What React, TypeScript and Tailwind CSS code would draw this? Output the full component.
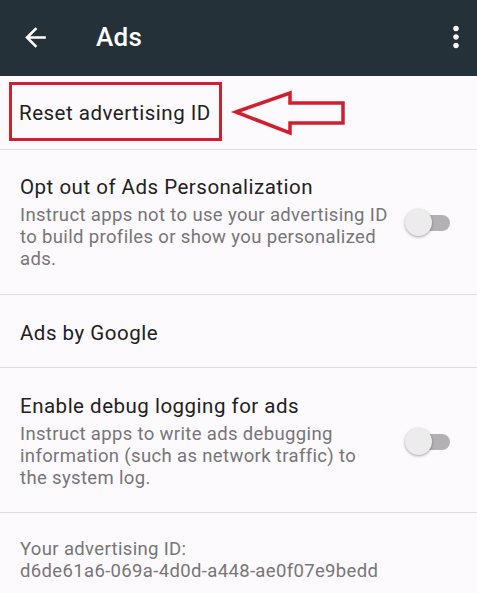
import React from "react";

function Toggle() {
  return (
    <div className="relative w-[45px] h-[28px] flex items-center">
      <div className="absolute left-[6px] right-0 h-[16px] rounded-full bg-[#b3b1b3]" />
      <div className="absolute left-0 w-[27px] h-[27px] rounded-full bg-[#ececec] shadow-[0_1px_3px_rgba(0,0,0,0.35)]" />
    </div>
  );
}

function Divider() {
  return <div className="h-px bg-[#dedbde]" />;
}

const title = "text-[20.5px] leading-[24px] tracking-[0.5px] text-[#212121]";
const summary = "text-[18.5px] leading-[22px] tracking-[0.35px] text-[#777577]";

function Lines({ lines }: { lines: string[] }) {
  return (
    <div className={"mt-[5px] whitespace-nowrap " + summary}>
      {lines.map((l) => (
        <div key={l}>{l}</div>
      ))}
    </div>
  );
}

export default function App() {
  return (
    <div
      className="w-[477px] h-[593px] overflow-hidden bg-[#fcfafc] flex flex-col"
      style={{ fontFamily: "Roboto, 'Noto Sans', sans-serif" }}
    >
      {/* Header */}
      <div className="h-[76px] bg-[#253139] flex items-center relative shrink-0">
        <svg width="31" height="31" viewBox="0 0 24 24" className="ml-[20px] mt-[-2px]" fill="#ffffff">
          <path d="M20 11H7.83l5.59-5.59L12 4l-8 8 8 8 1.41-1.41L7.83 13H20v-2z" />
        </svg>
        <div className="ml-[45px] mt-[-2px] text-white text-[26px] tracking-[0.3px] font-medium leading-none">Ads</div>
        <div className="flex-1" />
        <svg width="34" height="34" viewBox="0 0 24 24" className="mr-[4px] mt-[-2px]" fill="#ffffff">
          <path d="M12 8c1.1 0 2-.9 2-2s-.9-2-2-2-2 .9-2 2 .9 2 2 2zm0 2c-1.1 0-2 .9-2 2s.9 2 2 2 2-.9 2-2-.9-2-2-2zm0 6c-1.1 0-2 .9-2 2s.9 2 2 2 2-.9 2-2-.9-2-2-2z" />
        </svg>
      </div>

      {/* Reset advertising ID */}
      <div className="relative h-[73px] pt-[6px] pl-[9px] shrink-0">
        <div className="w-[213px] h-[59px] border-[3px] border-[#d0202f] pl-[7px] pt-[16px]">
          <div className={title + " whitespace-nowrap"}>Reset advertising ID</div>
        </div>
        <svg
          className="absolute left-0 top-0"
          width="477"
          height="73"
          viewBox="0 0 477 73"
          fill="none"
        >
          <polygon
            points="236,36 290,17 290,27 343,27 343,47 290,47 290,57"
            stroke="#d0202f"
            strokeWidth="3.5"
            strokeLinejoin="miter"
          />
        </svg>
      </div>
      <Divider />

      {/* Opt out */}
      <div className="flex items-center pl-[20px] pt-[25px] pb-[24px] shrink-0">
        <div className="w-[365px]">
          <div className={title}>Opt out of Ads Personalization</div>
          <Lines
            lines={[
              "Instruct apps not to use your advertising ID",
              "to build profiles or show you personalized",
              "ads.",
            ]}
          />
        </div>
        <div className="ml-[20px]">
          <Toggle />
        </div>
      </div>
      <Divider />

      {/* Ads by Google */}
      <div className="pl-[20px] pt-[26px] pb-[22px] shrink-0">
        <div className={title}>Ads by Google</div>
      </div>
      <Divider />

      {/* Debug logging */}
      <div className="flex items-center pl-[20px] pt-[26px] pb-[23px] shrink-0">
        <div className="w-[365px]">
          <div className={title}>Enable debug logging for ads</div>
          <Lines
            lines={[
              "Instruct apps to write ads debugging",
              "information (such as network traffic) to",
              "the system log.",
            ]}
          />
        </div>
        <div className="ml-[20px]">
          <Toggle />
        </div>
      </div>
      <Divider />

      {/* ID */}
      <div className={"pl-[20px] pt-[25px] " + summary}>
        <div>Your advertising ID:</div>
        <div>d6de61a6-069a-4d0d-a448-ae0f07e9bedd</div>
      </div>
    </div>
  );
}
